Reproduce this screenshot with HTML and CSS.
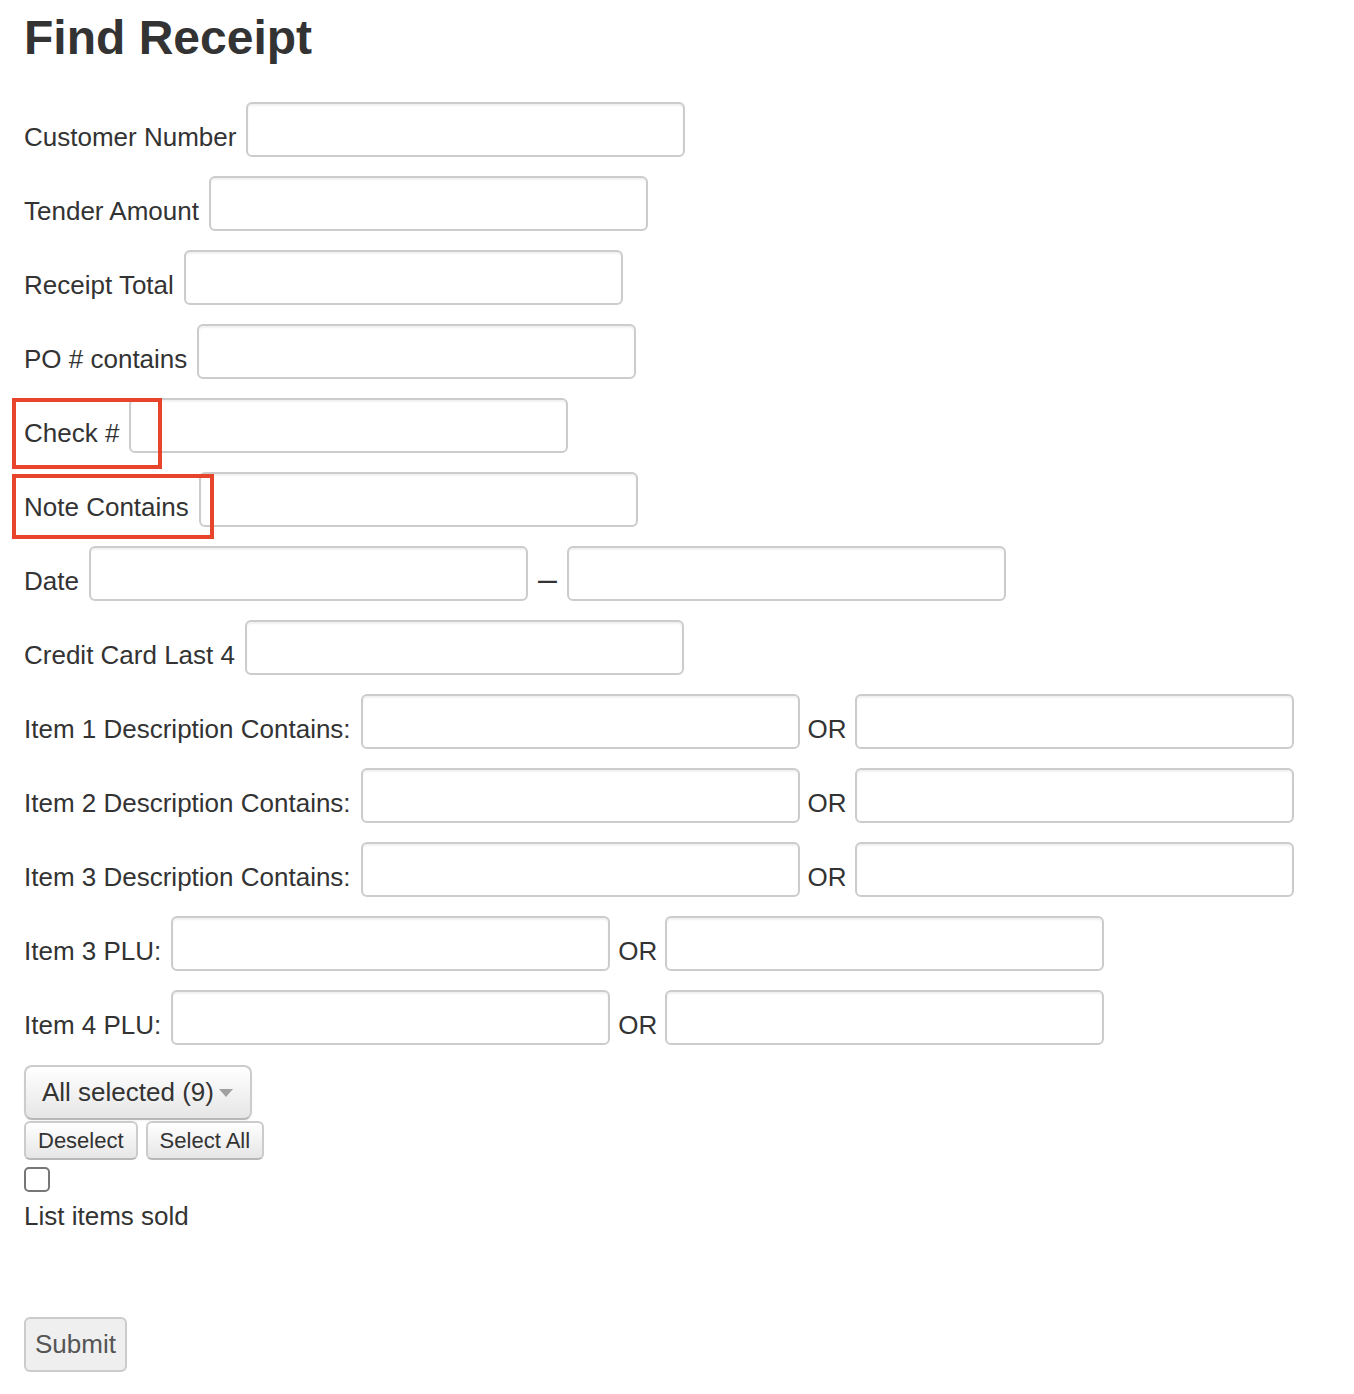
FILE: index.html
```html
<!DOCTYPE html>
<html lang="en">
<head>
<meta charset="utf-8">
<title>Find Receipt</title>
<link rel="stylesheet" href="styles.css">
</head>
<body>
<main class="page">
  <h1 class="title">Find Receipt</h1>
  <form class="form">
    <div class="row"><label class="lbl">Customer Number</label><input class="field" type="text"></div>
    <div class="row"><label class="lbl">Tender Amount</label><input class="field" type="text"></div>
    <div class="row"><label class="lbl">Receipt Total</label><input class="field" type="text"></div>
    <div class="row"><label class="lbl">PO # contains</label><input class="field" type="text"></div>
    <div class="row"><label class="lbl">Check #</label><input class="field" type="text"><span class="mark mark-check"></span></div>
    <div class="row"><label class="lbl">Note Contains</label><input class="field" type="text"><span class="mark mark-note"></span></div>
    <div class="row"><label class="lbl">Date</label><input class="field" type="text"><span class="dash">–</span><input class="field" type="text"></div>
    <div class="row"><label class="lbl">Credit Card Last 4</label><input class="field" type="text"></div>
    <div class="row"><label class="lbl">Item 1 Description Contains:</label><input class="field" type="text"><span class="or">OR</span><input class="field" type="text"></div>
    <div class="row"><label class="lbl">Item 2 Description Contains:</label><input class="field" type="text"><span class="or">OR</span><input class="field" type="text"></div>
    <div class="row"><label class="lbl">Item 3 Description Contains:</label><input class="field" type="text"><span class="or">OR</span><input class="field" type="text"></div>
    <div class="row"><label class="lbl">Item 3 PLU:</label><input class="field" type="text"><span class="or">OR</span><input class="field" type="text"></div>
    <div class="row"><label class="lbl">Item 4 PLU:</label><input class="field" type="text"><span class="or">OR</span><input class="field" type="text"></div>

    <button type="button" class="dropdown">All selected (9)<span class="caret"></span></button>
    <div class="btn-row">
      <button type="button" class="small-btn">Deselect</button>
      <button type="button" class="small-btn">Select All</button>
    </div>
    <input class="check" type="checkbox">
    <div class="check-label">List items sold</div>
    <button type="submit" class="submit">Submit</button>
  </form>
</main>
</body>
</html>
```
FILE: styles.css
```css
html, body {
  margin: 0;
  padding: 0;
  background: #ffffff;
}
body {
  font-family: "Liberation Sans", Arial, Helvetica, sans-serif;
  color: #333333;
}
.page {
  padding: 0 24px;
}
.title {
  margin: 11px 0 38px;
  font-size: 48px;
  line-height: 53px;
  font-weight: bold;
  color: #333333;
}
.form {
  display: flex;
  flex-direction: column;
  align-items: flex-start;
}
.row {
  position: relative;
  display: flex;
  align-items: flex-end;
  gap: 8px;
  height: 55px;
  margin-bottom: 19px;
}
.lbl,
.or {
  font-size: 26px;
  line-height: 30px;
  padding-bottom: 5px;
  white-space: nowrap;
}
.lbl {
  margin-right: 2px;
}
.field {
  box-sizing: border-box;
  width: 439px;
  height: 55px;
  margin: 0;
  padding: 4px 10px;
  border: 2px solid #cccccc;
  border-radius: 6px;
  background: #ffffff;
  box-shadow: inset 0 2px 2px rgba(0, 0, 0, 0.06);
  font-family: inherit;
  font-size: 26px;
  color: #555555;
  outline: none;
}
.dash {
  font-size: 34px;
  line-height: 34px;
  padding-bottom: 6px;
  margin: 0 2px;
}
.mark {
  position: absolute;
  border: 4px solid #e8442c;
  box-sizing: border-box;
  pointer-events: none;
}
.mark-check {
  left: -12px;
  top: 0;
  width: 150px;
  height: 71px;
}
.mark-note {
  left: -12px;
  top: 2px;
  width: 202px;
  height: 65px;
}
.dropdown {
  display: inline-flex;
  align-items: center;
  box-sizing: border-box;
  height: 55px;
  margin: 1px 0 0;
  padding: 0 17px 0 16px;
  border: 2px solid #cccccc;
  border-bottom-color: #b8b8b8;
  border-radius: 8px;
  background: linear-gradient(#ffffff, #e6e6e6);
  box-shadow: inset 0 1px 0 rgba(255, 255, 255, 0.2), 0 1px 2px rgba(0, 0, 0, 0.05);
  font-family: inherit;
  font-size: 26px;
  color: #333333;
  cursor: pointer;
}
.caret {
  width: 0;
  height: 0;
  margin-left: 5px;
  border-top: 8px solid #a0a0a0;
  border-left: 7.5px solid transparent;
  border-right: 7.5px solid transparent;
}
.btn-row {
  display: flex;
  gap: 8px;
  margin-top: 1px;
}
.small-btn {
  box-sizing: border-box;
  height: 39px;
  margin: 0;
  padding: 0 12px;
  border: 2px solid #cccccc;
  border-bottom-color: #b8b8b8;
  border-radius: 6px;
  background: linear-gradient(#ffffff, #e6e6e6);
  font-family: inherit;
  font-size: 22px;
  color: #333333;
  cursor: pointer;
}
.check {
  -webkit-appearance: none;
  appearance: none;
  box-sizing: border-box;
  display: block;
  width: 26px;
  height: 25px;
  margin: 7px 0 0;
  border: 2px solid #777777;
  border-radius: 5px;
  background: #ffffff;
}
.check-label {
  margin-top: 9px;
  font-size: 26px;
  line-height: 30px;
}
.submit {
  box-sizing: border-box;
  height: 55px;
  margin: 86px 0 0;
  padding: 0 9px;
  border: 2px solid #cbcbcb;
  border-radius: 6px;
  background: #efefef;
  font-family: inherit;
  font-size: 26px;
  color: #555555;
  cursor: pointer;
}
```
